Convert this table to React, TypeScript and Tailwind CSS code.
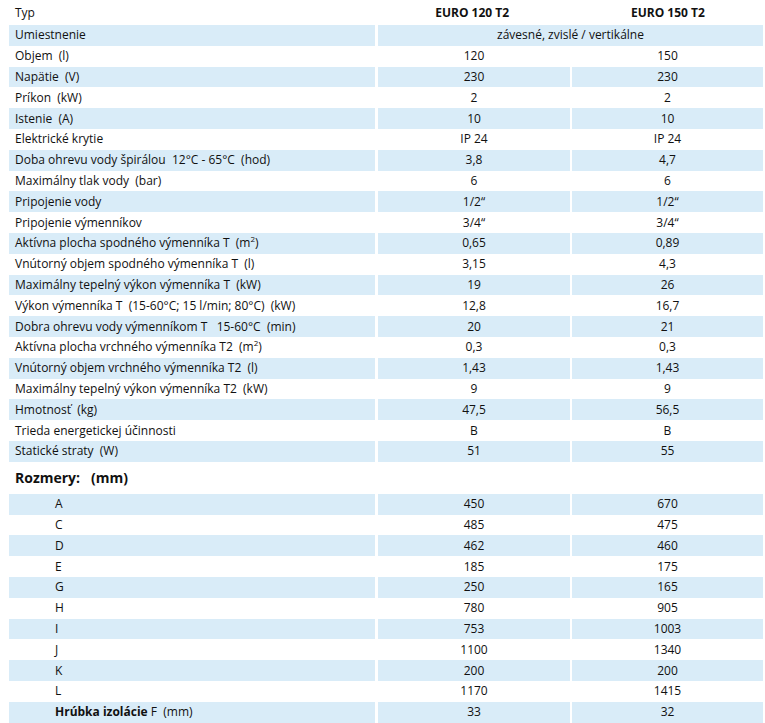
type Row = {
  label: React.ReactNode;
  a: string;
  b?: string;
  span?: boolean;
};

const specs: Row[] = [
  { label: 'Umiestnenie', a: 'závesné, zvislé / vertikálne', span: true },
  { label: 'Objem  (l)', a: '120', b: '150' },
  { label: 'Napätie  (V)', a: '230', b: '230' },
  { label: 'Príkon  (kW)', a: '2', b: '2' },
  { label: 'Istenie  (A)', a: '10', b: '10' },
  { label: 'Elektrické krytie', a: 'IP 24', b: 'IP 24' },
  { label: 'Doba ohrevu vody špirálou  12°C - 65°C  (hod)', a: '3,8', b: '4,7' },
  { label: 'Maximálny tlak vody  (bar)', a: '6', b: '6' },
  { label: 'Pripojenie vody', a: '1/2“', b: '1/2“' },
  { label: 'Pripojenie výmenníkov', a: '3/4“', b: '3/4“' },
  {
    label: (
      <>
        Aktívna plocha spodného výmenníka T  (m<sup className="text-[8px]">2</sup>)
      </>
    ),
    a: '0,65',
    b: '0,89',
  },
  { label: 'Vnútorný objem spodného výmenníka T  (l)', a: '3,15', b: '4,3' },
  { label: 'Maximálny tepelný výkon výmenníka T  (kW)', a: '19', b: '26' },
  { label: 'Výkon výmenníka T  (15-60°C; 15 l/min; 80°C)  (kW)', a: '12,8', b: '16,7' },
  { label: 'Dobra ohrevu vody výmenníkom T   15-60°C  (min)', a: '20', b: '21' },
  {
    label: (
      <>
        Aktívna plocha vrchného výmenníka T2  (m<sup className="text-[8px]">2</sup>)
      </>
    ),
    a: '0,3',
    b: '0,3',
  },
  { label: 'Vnútorný objem vrchného výmenníka T2  (l)', a: '1,43', b: '1,43' },
  { label: 'Maximálny tepelný výkon výmenníka T2  (kW)', a: '9', b: '9' },
  { label: 'Hmotnosť  (kg)', a: '47,5', b: '56,5' },
  { label: 'Trieda energetickej účinnosti', a: 'B', b: 'B' },
  { label: 'Statické straty  (W)', a: '51', b: '55' },
];

const dims: Row[] = [
  { label: 'A', a: '450', b: '670' },
  { label: 'C', a: '485', b: '475' },
  { label: 'D', a: '462', b: '460' },
  { label: 'E', a: '185', b: '175' },
  { label: 'G', a: '250', b: '165' },
  { label: 'H', a: '780', b: '905' },
  { label: 'I', a: '753', b: '1003' },
  { label: 'J', a: '1100', b: '1340' },
  { label: 'K', a: '200', b: '200' },
  { label: 'L', a: '1170', b: '1415' },
  {
    label: (
      <>
        <span className="font-bold">Hrúbka izolácie</span> F  (mm)
      </>
    ),
    a: '33',
    b: '32',
  },
];

function TableRow({ row, shaded, indent }: { row: Row; shaded: boolean; indent?: boolean }) {
  const bg = shaded ? 'bg-[#d9ecf8]' : 'bg-white';
  return (
    <div className="flex h-[20.8px] gap-[3px]">
      <div className={`w-[366px] flex items-center whitespace-pre ${indent ? 'pl-[46px]' : 'pl-[6px]'} ${bg}`}>
        {row.label}
      </div>
      {row.span ? (
        <div className={`w-[385px] flex items-center justify-center ${bg}`}>{row.a}</div>
      ) : (
        <div className="flex gap-[2px]">
          <div className={`w-[192px] flex items-center justify-center ${bg}`}>{row.a}</div>
          <div className={`w-[191px] flex items-center justify-center ${bg}`}>{row.b}</div>
        </div>
      )}
    </div>
  );
}

export default function App() {
  return (
    <div className="w-[765px] h-[723px] bg-white text-[#111] text-[12px] leading-none font-['Open_Sans',sans-serif] overflow-hidden">
      <div className="ml-[9px] w-[754px]">
        {/* Header */}
        <div className="flex h-[25px] gap-[3px] items-center">
          <div className="w-[366px] pl-[6px]">Typ</div>
          <div className="w-[192px] text-center font-bold">EURO 120 T2</div>
          <div className="w-[191px] text-center font-bold ml-[2px]">EURO 150 T2</div>
        </div>

        {specs.map((r, i) => (
          <TableRow key={i} row={r} shaded={i % 2 === 0} />
        ))}

        {/* Rozmery */}
        <div className="h-[32px] flex items-center pl-[6px] text-[14px] font-bold whitespace-pre">
          Rozmery:   (mm)
        </div>

        {dims.map((r, i) => (
          <TableRow key={i} row={r} shaded={i % 2 === 0} indent />
        ))}
      </div>
    </div>
  );
}
